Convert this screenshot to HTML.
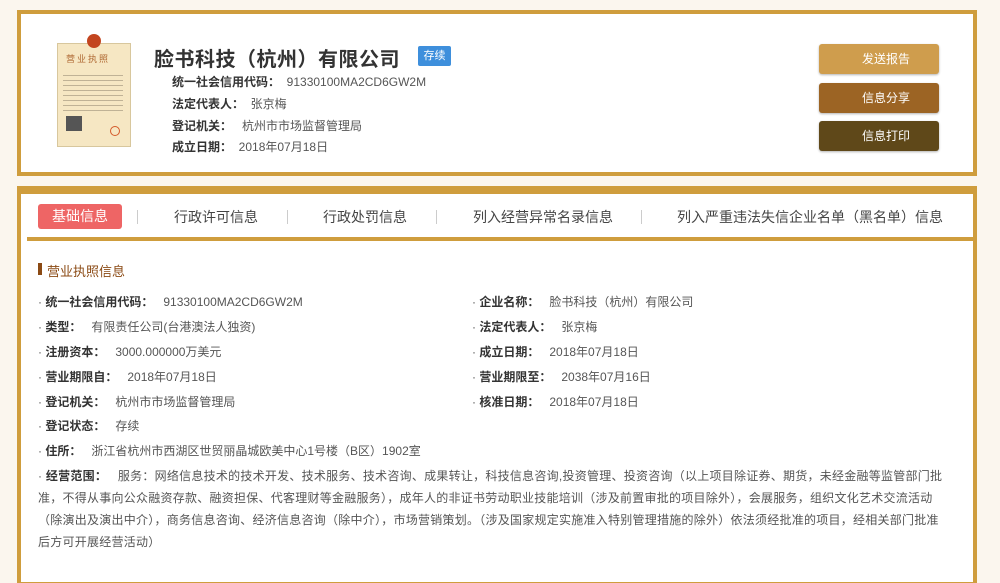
<!DOCTYPE html>
<html><head><meta charset="utf-8"><style>
*{margin:0;padding:0;box-sizing:border-box}
html,body{width:1000px;height:583px;overflow:hidden}
body{background:#fbf6ee;font-family:"Liberation Sans","Noto Sans CJK SC",sans-serif;position:relative;color:#555;font-size:12px}
.a{position:absolute;white-space:nowrap}
.card1{position:absolute;left:17px;top:10px;width:960px;height:166px;background:#fff;border:4px solid #cf9d3d}
.card2{position:absolute;left:17px;top:186px;width:960px;height:400px;background:#fff;border:4px solid #cf9d3d;border-top-width:8px}
.btn{position:absolute;left:819px;width:120px;height:30px;border-radius:3px;color:#fff;font-size:12px;text-align:center;line-height:30px;padding-left:14px;box-shadow:0 1px 2px rgba(0,0,0,.3)}
.lb{font-weight:bold;color:#333}
.tab{position:absolute;top:207px;font-size:14px;color:#444}
.sep{position:absolute;top:210px;width:1px;height:14px;background:#ccc}
.row{position:absolute;font-size:12px;color:#555;white-space:nowrap}
.row b{color:#333}
.sc{letter-spacing:0.25px}
</style></head><body>
<div class="card1"></div>
<div class="card2"></div>
<div style="position:absolute;left:27px;top:237px;width:946px;height:4px;background:#cf9d3d"></div>
<div class="a" style="left:57px;top:43px;width:74px;height:104px;background:#f6e7c3;border:1px solid #d8c79d"></div>
<div class="a" style="left:87px;top:34px;width:14px;height:14px;border-radius:50%;background:#c3451f"></div>
<div class="a" style="left:66px;top:52px;font-size:9px;color:#b06a34;letter-spacing:2px">营业执照</div>
<div class="a" style="left:63px;top:72px;width:60px;height:40px;background:repeating-linear-gradient(#f6e7c3 0 3px,#9b8f77 3px 4px,#f6e7c3 4px 5px);opacity:.6"></div>
<div class="a" style="left:66px;top:116px;width:16px;height:15px;background:#555"></div>
<div class="a" style="left:110px;top:126px;width:10px;height:10px;border-radius:50%;border:1px solid #d45a2a"></div>
<div class="a" style="left:154px;top:43px;font-size:20px;font-weight:bold;color:#333;letter-spacing:0.5px">脸书科技（杭州）有限公司</div>
<div class="a" style="left:418px;top:46px;width:33px;height:20px;background:#3e8fdc;color:#fff;font-size:11px;line-height:20px;text-align:center;border-radius:2px">存续</div>
<div class="a" style="left:172px;top:73px"><b class="lb">统一社会信用代码：</b>&nbsp; 91330100MA2CD6GW2M</div>
<div class="a" style="left:172px;top:95px"><b class="lb">法定代表人：</b>&nbsp; 张京梅</div>
<div class="a" style="left:172px;top:117px"><b class="lb">登记机关：</b>&nbsp;&nbsp; 杭州市市场监督管理局</div>
<div class="a" style="left:172px;top:138px"><b class="lb">成立日期：</b>&nbsp; 2018年07月18日</div>
<div class="btn" style="top:44px;background:#cf9d4d">发送报告</div>
<div class="btn" style="top:83px;background:#9c6424">信息分享</div>
<div class="btn" style="top:121px;background:#5f4819">信息打印</div>
<div class="a" style="left:38px;top:204px;width:84px;height:25px;background:#ee6565;border-radius:3px;color:#fff;font-size:14px;line-height:25px;text-align:center">基础信息</div>
<div class="sep" style="left:137px"></div>
<div class="tab" style="left:174px">行政许可信息</div>
<div class="sep" style="left:287px"></div>
<div class="tab" style="left:323px">行政处罚信息</div>
<div class="sep" style="left:436px"></div>
<div class="tab" style="left:473px">列入经营异常名录信息</div>
<div class="sep" style="left:641px"></div>
<div class="tab" style="left:677px">列入严重违法失信企业名单（黑名单）信息</div>
<div class="a" style="left:38px;top:263px;width:4px;height:12px;background:#8b4a14"></div>
<div class="a" style="left:47px;top:261px;font-size:13px;color:#8b4a14">营业执照信息</div>
<div class="row" style="left:38px;top:293px">· <b>统一社会信用代码：</b>&nbsp;&nbsp; 91330100MA2CD6GW2M</div>
<div class="row" style="left:38px;top:318px">· <b>类型：</b>&nbsp;&nbsp; 有限责任公司(台港澳法人独资)</div>
<div class="row" style="left:38px;top:343px">· <b>注册资本：</b>&nbsp;&nbsp; 3000.000000万美元</div>
<div class="row" style="left:38px;top:368px">· <b>营业期限自：</b>&nbsp;&nbsp; 2018年07月18日</div>
<div class="row" style="left:38px;top:393px">· <b>登记机关：</b>&nbsp;&nbsp; 杭州市市场监督管理局</div>
<div class="row" style="left:38px;top:417px">· <b>登记状态：</b>&nbsp;&nbsp; 存续</div>
<div class="row" style="left:38px;top:442px">· <b>住所：</b>&nbsp;&nbsp; 浙江省杭州市西湖区世贸丽晶城欧美中心1号楼（B区）1902室</div>
<div class="row" style="left:472px;top:293px">· <b>企业名称：</b>&nbsp;&nbsp; 脸书科技（杭州）有限公司</div>
<div class="row" style="left:472px;top:318px">· <b>法定代表人：</b>&nbsp;&nbsp; 张京梅</div>
<div class="row" style="left:472px;top:343px">· <b>成立日期：</b>&nbsp;&nbsp; 2018年07月18日</div>
<div class="row" style="left:472px;top:368px">· <b>营业期限至：</b>&nbsp;&nbsp; 2038年07月16日</div>
<div class="row" style="left:472px;top:393px">· <b>核准日期：</b>&nbsp;&nbsp; 2018年07月18日</div>
<div class="row sc" style="left:38px;top:467px">· <b>经营范围：</b>&nbsp;&nbsp; 服务：网络信息技术的技术开发、技术服务、技术咨询、成果转让，科技信息咨询,投资管理、投资咨询（以上项目除证券、期货，未经金融等监管部门批</div>
<div class="row sc" style="left:38px;top:489px">准，不得从事向公众融资存款、融资担保、代客理财等金融服务），成年人的非证书劳动职业技能培训（涉及前置审批的项目除外），会展服务，组织文化艺术交流活动</div>
<div class="row sc" style="left:38px;top:511px">（除演出及演出中介），商务信息咨询、经济信息咨询（除中介），市场营销策划。（涉及国家规定实施准入特别管理措施的除外）依法须经批准的项目，经相关部门批准</div>
<div class="row sc" style="left:38px;top:533px">后方可开展经营活动）</div>
</body></html>
